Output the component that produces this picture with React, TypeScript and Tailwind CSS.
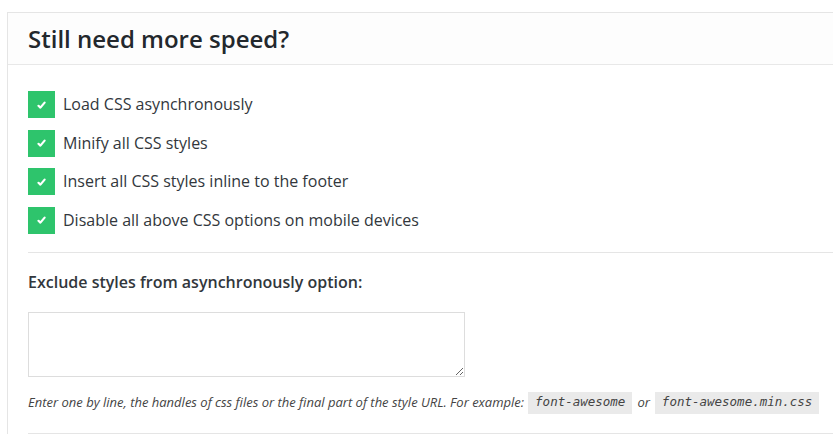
import React from "react";

const options = [
  "Load CSS asynchronously",
  "Minify all CSS styles",
  "Insert all CSS styles inline to the footer",
  "Disable all above CSS options on mobile devices",
];

function Check() {
  return (
    <span className="flex h-[27px] w-[27px] shrink-0 items-center justify-center bg-[#2ec46c]">
      <svg width="9" height="8" viewBox="0 0 9 8" fill="none">
        <path d="M1.5 4.8 L3.4 6.6 L7.6 1.6" stroke="#ffffff" strokeWidth="2.2" strokeLinecap="round" strokeLinejoin="round" />
      </svg>
    </span>
  );
}

export default function App() {
  return (
    <div className="min-h-screen overflow-hidden bg-white pl-[7px] pt-[12px] font-['Open_Sans',sans-serif] text-[#32373c]">
      <div className="border-l border-t border-[#e5e5e5] bg-white">
        <div className="flex h-[52px] items-center border-b border-[#e8e8e8] bg-[#fdfdfd] pl-[20px]">
          <h2 className="text-[24px] font-semibold leading-none text-[#23282d]">Still need more speed?</h2>
        </div>
        <div className="pl-[20px] pt-[26px]">
          <div className="flex flex-col gap-[11.5px]">
            {options.map((o) => (
              <div key={o} className="flex items-center gap-[8px]">
                <Check />
                <span className="text-[16px] leading-[27px] text-[#32373c]">{o}</span>
              </div>
            ))}
          </div>
          <div className="mt-[18px] border-t border-[#e5e5e5]" />
          <div className="pt-[17px] text-[16px] font-semibold leading-[24px] text-[#32373c]">
            Exclude styles from asynchronously option:
          </div>
          <textarea
            readOnly
            className="mt-[18px] block h-[65px] w-[437px] resize border border-[#dddddd] bg-white outline-none"
          />
          <div className="mt-[15px] flex h-[22px] items-center whitespace-nowrap text-[13px] italic text-[#444]">
            <span>Enter one by line, the handles of css files or the final part of the style URL. For example:</span>
            <code className="ml-[4px] flex h-[22px] items-center bg-[#eaeaea] px-[7px] font-['DejaVu_Sans_Mono',monospace] text-[12.5px] italic text-[#444]">font-awesome</code>
            <span className="mx-[5px]">or</span>
            <code className="flex h-[22px] items-center bg-[#eaeaea] px-[7px] font-['DejaVu_Sans_Mono',monospace] text-[12.5px] italic text-[#444]">font-awesome.min.css</code>
          </div>
          <div className="mt-[19px] border-t border-[#e5e5e5]" />
        </div>
      </div>
    </div>
  );
}
